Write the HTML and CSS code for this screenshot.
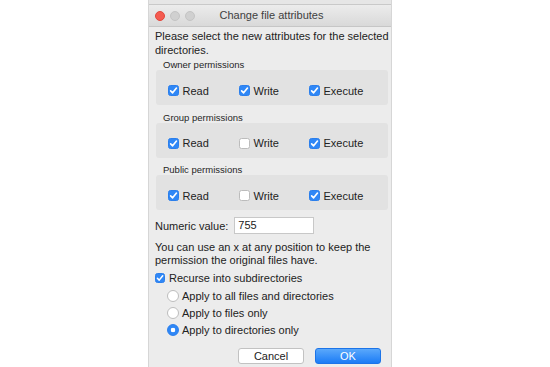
FILE: index.html
```html
<!DOCTYPE html>
<html>
<head>
<meta charset="utf-8">
<link rel="stylesheet" href="styles.css">
</head>
<body>
<div class="stage">
  <div class="window">
    <div class="bgwin"></div>
    <div class="titlebar">
      <div class="lights"><span class="light red"></span><span class="light"></span><span class="light"></span></div>
      <div class="title">Change file attributes</div>
    </div>
    <div class="content">
      <p class="intro">Please select the new attributes for the selected directories.</p>

      <div class="group-label">Owner permissions</div>
      <div class="group">
        <label class="cb"><span class="box on"><svg viewBox="0 0 10 10"><path d="M2.4 5.3 L4.2 7.1 L7.7 2.8"/></svg></span>Read</label>
        <label class="cb"><span class="box on"><svg viewBox="0 0 10 10"><path d="M2.4 5.3 L4.2 7.1 L7.7 2.8"/></svg></span>Write</label>
        <label class="cb"><span class="box on"><svg viewBox="0 0 10 10"><path d="M2.4 5.3 L4.2 7.1 L7.7 2.8"/></svg></span>Execute</label>
      </div>

      <div class="group-label">Group permissions</div>
      <div class="group">
        <label class="cb"><span class="box on"><svg viewBox="0 0 10 10"><path d="M2.4 5.3 L4.2 7.1 L7.7 2.8"/></svg></span>Read</label>
        <label class="cb"><span class="box"></span>Write</label>
        <label class="cb"><span class="box on"><svg viewBox="0 0 10 10"><path d="M2.4 5.3 L4.2 7.1 L7.7 2.8"/></svg></span>Execute</label>
      </div>

      <div class="group-label">Public permissions</div>
      <div class="group">
        <label class="cb"><span class="box on"><svg viewBox="0 0 10 10"><path d="M2.4 5.3 L4.2 7.1 L7.7 2.8"/></svg></span>Read</label>
        <label class="cb"><span class="box"></span>Write</label>
        <label class="cb"><span class="box on"><svg viewBox="0 0 10 10"><path d="M2.4 5.3 L4.2 7.1 L7.7 2.8"/></svg></span>Execute</label>
      </div>

      <div class="numeric">
        <span>Numeric value:</span>
        <div class="input">755</div>
      </div>

      <p class="hint">You can use an x at any position to keep the permission the original files have.</p>

      <label class="cb recurse"><span class="box on"><svg viewBox="0 0 10 10"><path d="M2.4 5.3 L4.2 7.1 L7.7 2.8"/></svg></span>Recurse into subdirectories</label>

      <div class="radios">
        <label class="rb"><span class="radio"></span>Apply to all files and directories</label>
        <label class="rb"><span class="radio"></span>Apply to files only</label>
        <label class="rb"><span class="radio on"></span>Apply to directories only</label>
      </div>

      <div class="buttons">
        <div class="btn">Cancel</div>
        <div class="btn primary">OK</div>
      </div>
    </div>
  </div>
</div>
</body>
</html>
```

FILE: styles.css
```css
html, body {
  margin: 0;
  padding: 0;
  background: #ffffff;
}
body {
  width: 550px;
  height: 367px;
  overflow: hidden;
  font-family: "Liberation Sans", Arial, sans-serif;
  color: #222222;
}
.stage {
  padding-left: 148px;
}
.window {
  width: 244px;
  height: 367px;
  background: #ececec;
  border-left: 1px solid #d6d6d6;
  border-right: 1px solid #d6d6d6;
  box-sizing: border-box;
}
.bgwin {
  height: 4px;
  background: #e6e6e6;
  border-bottom: 1px solid #c9c9c9;
}
.titlebar {
  height: 21px;
  background: linear-gradient(#ececec, #d9d9d9);
  border-bottom: 1px solid #c6c6c6;
  display: flex;
  align-items: center;
  position: relative;
}
.lights {
  display: flex;
  gap: 5px;
  padding-left: 6px;
}
.light {
  width: 10px;
  height: 10px;
  border-radius: 50%;
  background: #d0d0d0;
  box-sizing: border-box;
  border: 0.5px solid #c4c4c4;
}
.light.red {
  background: #f45b50;
  border-color: #e2463c;
}
.title {
  position: absolute;
  left: 0;
  right: 0;
  top: 0;
  line-height: 21px;
  text-align: center;
  font-size: 11px;
  color: #404040;
  padding-left: 3px;
}
.content {
  padding: 1.5px 0 0 6px;
  font-size: 11px;
}
.intro {
  margin: 0;
  line-height: 14px;
}
.group-label {
  font-size: 9.5px;
  line-height: 11px;
  margin: 6.5px 0 0 8px;
  color: #262626;
}
.intro + .group-label {
  margin-top: 2.5px;
}
.group {
  margin-left: 1px;
  width: 232px;
  height: 35px;
  background: #e2e2e2;
  border-radius: 3px;
  display: grid;
  grid-template-columns: 71px 70px auto;
  align-content: start;
  padding: 14px 0 0 12px;
  box-sizing: border-box;
}
.cb {
  display: flex;
  align-items: center;
  gap: 3.5px;
  height: 13px;
}
.box {
  width: 11px;
  height: 11px;
  border-radius: 2.5px;
  background: #ffffff;
  border: 1px solid #bcbcbc;
  box-sizing: border-box;
  display: flex;
  flex: none;
}
.box.on {
  background: #2f87f6;
  border-color: #2b7fec;
}
.box svg {
  width: 11px;
  height: 11px;
  margin: -1px;
}
.box svg path {
  fill: none;
  stroke: #ffffff;
  stroke-width: 1.5;
  stroke-linecap: round;
  stroke-linejoin: round;
}
.numeric {
  display: flex;
  align-items: center;
  gap: 6px;
  margin-top: 7px;
  height: 17px;
}
.input {
  width: 80px;
  height: 17px;
  background: #ffffff;
  border: 1px solid #c8c8c8;
  box-sizing: border-box;
  padding-left: 3px;
  line-height: 15px;
}
.hint {
  margin: 6.5px 0 0 0;
  line-height: 13px;
}
.recurse {
  margin-top: 5px;
  gap: 4px;
}
.recurse .box {
  width: 10px;
  height: 10px;
}
.recurse .box svg {
  width: 10px;
  height: 10px;
}
.radios {
  padding-left: 12px;
  margin-top: 3.5px;
}
.rb {
  display: flex;
  align-items: center;
  gap: 3px;
  height: 16.7px;
}
.radio {
  width: 12px;
  height: 12px;
  border-radius: 50%;
  background: #ffffff;
  border: 1px solid #bdbdbd;
  box-sizing: border-box;
  flex: none;
}
.radio.on {
  background: radial-gradient(circle, #ffffff 0 2px, #2f87f6 2.6px);
  border-color: #2b7fec;
}
.buttons {
  display: flex;
  justify-content: flex-end;
  gap: 11px;
  margin-top: 9.8px;
  padding-right: 10px;
}
.btn {
  width: 66px;
  height: 16px;
  background: #ffffff;
  border: 0.5px solid #c2c2c2;
  border-radius: 3px;
  box-sizing: border-box;
  text-align: center;
  line-height: 15px;
  color: #222222;
}
.btn.primary {
  background: linear-gradient(#5aa8fb, #1b7cf6);
  border-color: #1c74e8;
  color: #ffffff;
}
```
